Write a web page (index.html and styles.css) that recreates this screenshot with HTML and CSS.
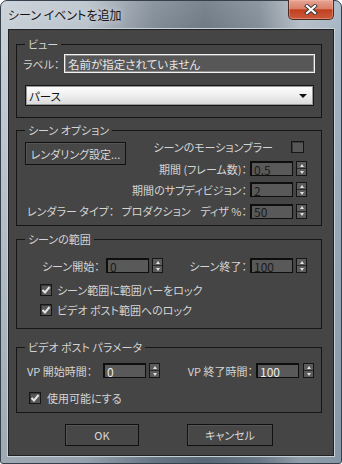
FILE: index.html
```html
<!DOCTYPE html>
<html lang="ja">
<head>
  <meta charset="UTF-8" />
  <meta name="viewport" content="width=device-width, initial-scale=1.0"/>
  <title>シーン イベントを追加</title>
  <link rel="stylesheet" href="styles.css">
</head>
<body>

  <div class="window">
    <div class="titlebar">
      <span class="title">シーン イベントを追加</span>
      <button class="close-btn" type="button">
        <svg width="14" height="11" viewBox="0 0 14 11">
          <path d="M3 2 L11 9 M11 2 L3 9" stroke="#3b3b3b" stroke-width="4" stroke-linecap="square"/>
          <path d="M3 2 L11 9 M11 2 L3 9" stroke="#ffffff" stroke-width="2.2" stroke-linecap="square"/>
        </svg>
      </button>
    </div>

    <div class="client">

      <fieldset class="group">
        <legend>ビュー</legend>
        <div class="group-body view-body">
          <div class="name-row">
            <label for="eventName">ラベル：</label>
            <input id="eventName" class="name-field" type="text" value="名前が指定されていません">
          </div>
          <div class="dropdown">
            <span>パース</span>
            <span class="dropdown-arrow"></span>
          </div>
        </div>
      </fieldset>

      <fieldset class="group group-options">
        <legend>シーン オプション</legend>
        <div class="group-body options-body">
          <div class="options-top">
            <button class="btn btn-render" type="button">レンダリング設定...</button>
            <div class="options-right">
              <div class="opt-row blur-row">
                <span>シーンのモーションブラー</span>
                <span class="check"></span>
              </div>
              <div class="opt-row">
                <span>期間 (フレーム数)：</span>
                <input class="num" type="text" value="0.5">
                <span class="spinner"><span class="spin-up"></span><span class="spin-down"></span></span>
              </div>
              <div class="opt-row">
                <span>期間のサブディビジョン：</span>
                <input class="num" type="text" value="2">
                <span class="spinner"><span class="spin-up"></span><span class="spin-down"></span></span>
              </div>
            </div>
          </div>
          <div class="options-bottom">
            <div class="renderer-type">レンダラー タイプ：&nbsp;&nbsp;&nbsp;プロダクション</div>
            <div class="opt-row">
              <span>ディザ %：</span>
              <input class="num" type="text" value="50">
              <span class="spinner"><span class="spin-up"></span><span class="spin-down"></span></span>
            </div>
          </div>
        </div>
      </fieldset>

      <fieldset class="group group-range">
        <legend>シーンの範囲</legend>
        <div class="group-body range-body">
          <div class="range-row">
            <div class="field-pair">
              <span class="range-label">シーン開始：</span>
              <input class="num" type="text" value="0">
              <span class="spinner"><span class="spin-up"></span><span class="spin-down"></span></span>
            </div>
            <div class="field-pair">
              <span>シーン終了：</span>
              <input class="num" type="text" value="100">
              <span class="spinner"><span class="spin-up"></span><span class="spin-down"></span></span>
            </div>
          </div>
          <div class="check-row range-check first">
            <span class="check checked"><svg width="10" height="10" viewBox="0 0 10 10"><path d="M1.5 5 L4 7.5 L8.5 2" fill="none" stroke="#e4e4e4" stroke-width="2"/></svg></span>
            <span>シーン範囲に範囲バーをロック</span>
          </div>
          <div class="check-row range-check">
            <span class="check checked"><svg width="10" height="10" viewBox="0 0 10 10"><path d="M1.5 5 L4 7.5 L8.5 2" fill="none" stroke="#e4e4e4" stroke-width="2"/></svg></span>
            <span>ビデオ ポスト範囲へのロック</span>
          </div>
        </div>
      </fieldset>

      <fieldset class="group group-vp">
        <legend>ビデオ ポスト パラメータ</legend>
        <div class="group-body vp-body">
          <div class="range-row">
            <div class="field-pair">
              <span class="vp-label">VP 開始時間：</span>
              <input class="num num-light" type="text" value="0">
              <span class="spinner"><span class="spin-up"></span><span class="spin-down"></span></span>
            </div>
            <div class="field-pair vp-end">
              <span>VP 終了時間：</span>
              <input class="num num-light" type="text" value="100">
              <span class="spinner"><span class="spin-up"></span><span class="spin-down"></span></span>
            </div>
          </div>
          <div class="check-row vp-check">
            <span class="check checked"><svg width="10" height="10" viewBox="0 0 10 10"><path d="M1.5 5 L4 7.5 L8.5 2" fill="none" stroke="#e4e4e4" stroke-width="2"/></svg></span>
            <span>使用可能にする</span>
          </div>
        </div>
      </fieldset>

      <div class="dialog-buttons">
        <button class="btn btn-ok" type="button">OK</button>
        <button class="btn btn-cancel" type="button">キャンセル</button>
      </div>

    </div>
  </div>

</body>
</html>
```

FILE: styles.css
```css
* {
  box-sizing: border-box;
}

body {
  margin: 0;
  font-family: "Noto Sans CJK JP", "Noto Sans", sans-serif;
  font-size: 11px;
  font-feature-settings: "palt";
  color: #d4d4d4;
  white-space: nowrap;
}

.window {
  width: 342px;
  height: 464px;
  display: flex;
  flex-direction: column;
  padding: 0 7px 7px;
  border: 1px solid #34404c;
  border-radius: 7px 7px 3px 3px;
  background:
    linear-gradient(to bottom, rgba(255, 255, 255, 0.12), rgba(255, 255, 255, 0) 40px, rgba(40, 60, 80, 0.25)),
    linear-gradient(to right, #c6ced6 0%, #b8c1ca 25%, #7d8894 45%, #6a7581 60%, #7f8a95 76%, #b3bdc6 88%, #a3b3c2 100%);
}

/* title bar */
.titlebar {
  height: 28px;
  display: flex;
  justify-content: space-between;
  align-items: flex-start;
}

.title {
  margin-top: 6px;
  font-size: 12px;
  line-height: 16px;
  color: #141414;
  text-shadow: 0 0 6px rgba(255, 255, 255, 0.7);
}

.close-btn {
  width: 46px;
  height: 20px;
  margin-top: -1px;
  padding: 0;
  display: flex;
  align-items: center;
  justify-content: center;
  border: 1px solid #4e2a24;
  border-top: none;
  border-radius: 0 0 5px 5px;
  background: linear-gradient(to bottom, #e7a595 0%, #d9806a 45%, #c2401f 52%, #cb5a3c 100%);
  box-shadow: inset 0 0 0 1px rgba(255, 200, 180, 0.35);
}

/* dialog body */
.client {
  flex: 1;
  display: flex;
  flex-direction: column;
  padding: 0 11px 0 7px;
  background: #454545;
  border: 1px solid #222222;
  box-shadow: 0 0 0 1px #c8d0d8;
}

.group {
  margin: 7px 0 0;
  padding: 0;
  min-width: 0;
  border: 1px solid #151515;
}

.group legend {
  margin-left: 8px;
  padding: 0 3px;
  line-height: 14px;
}

/* view */
.view-body {
  padding: 3px 6px 11px 6px;
}

.name-row {
  display: flex;
  align-items: center;
}

.name-row label {
  flex: 1;
}

.name-field {
  width: 251px;
  height: 19px;
  margin: 0;
  padding: 0 3px;
  font-family: inherit;
  font-size: 11.5px;
  font-feature-settings: "palt";
  color: #e6e6e6;
  background: #575757;
  border: 1px solid #f2f2f2;
  box-shadow: inset 0 0 0 1px #8c8c8c;
  outline: none;
}

.dropdown {
  height: 21px;
  margin: 12px 1px 0 2px;
  padding: 0 6px 0 3px;
  display: flex;
  align-items: center;
  justify-content: space-between;
  color: #111111;
  font-size: 11.5px;
  background: linear-gradient(to bottom, #ffffff, #f0f0f0 45%, #d9d9d9);
  border: 1px solid #161616;
  box-shadow: inset 0 0 0 1px #9a9a9a;
}

.dropdown-arrow {
  width: 0;
  height: 0;
  border-left: 4px solid transparent;
  border-right: 4px solid transparent;
  border-top: 4px solid #111111;
}

/* scene options */
.group-options {
  margin-top: 5px;
}

.options-body {
  padding: 4px 14px 6px 8px;
}

.options-top {
  display: flex;
  justify-content: space-between;
  align-items: flex-start;
}

.options-bottom {
  margin-top: 6px;
  display: flex;
  justify-content: space-between;
  align-items: center;
}

.btn {
  margin: 0;
  padding: 0;
  font-family: inherit;
  font-size: 11px;
  font-feature-settings: "palt";
  color: #d8d8d8;
  background: #474747;
  border: 1px solid #111111;
  box-shadow: inset 1px 1px 0 #555555;
}

.btn-render {
  width: 101px;
  height: 23px;
  margin-top: 1px;
}

.renderer-type {
  padding-left: 2px;
}

.options-right {
  display: flex;
  flex-direction: column;
  align-items: flex-end;
  gap: 6px;
}

.opt-row {
  height: 15px;
  display: flex;
  align-items: center;
  gap: 3px;
}

.blur-row {
  height: 12px;
  gap: 18px;
  margin-bottom: 2px;
  padding-right: 3px;
}

.num {
  width: 43px;
  height: 15px;
  margin: 0;
  padding: 0 2px;
  font-family: inherit;
  font-size: 12px;
  color: #1c1c1c;
  background: #595959;
  border: 1px solid #0e0e0e;
  border-width: 2px 1px 1px 2px;
  outline: none;
}

.num-light {
  color: #ececec;
}

.spinner {
  width: 11px;
  height: 15px;
  display: flex;
  flex-direction: column;
  border: 1px solid #151515;
  background: #5b5b5b;
}

.spin-up,
.spin-down {
  flex: 1;
  display: flex;
  align-items: center;
  justify-content: center;
}

.spin-up {
  border-bottom: 1px solid #2a2a2a;
}

.spin-up::after,
.spin-down::after {
  content: "";
  width: 0;
  height: 0;
  border-left: 2.5px solid transparent;
  border-right: 2.5px solid transparent;
}

.spin-up::after {
  border-bottom: 3px solid #e2e2e2;
}

.spin-down::after {
  border-top: 3px solid #e2e2e2;
}

.check {
  width: 13px;
  height: 12px;
  display: flex;
  align-items: center;
  justify-content: center;
  background: #575757;
  border: 1px solid #161616;
  box-shadow: inset 1px 1px 0 #3a3a3a;
}

.check.checked {
  width: 12px;
}

/* scene range */
.group-range {
  margin-top: 6px;
}

.range-body {
  padding: 12px 14px 12px 25px;
}

.range-row {
  display: flex;
  justify-content: space-between;
}

.field-pair {
  height: 15px;
  display: flex;
  align-items: center;
  gap: 3px;
}

.range-label {
  width: 61px;
}

.check-row {
  height: 12px;
  display: flex;
  align-items: center;
  gap: 5px;
}

.range-check {
  margin: 8px 0 0 -2px;
}

.range-check.first {
  margin-top: 11px;
}

/* video post */
.group-vp {
  margin-top: 11px;
}

.vp-body {
  padding: 9px 7px 8px 10px;
}

.vp-label {
  width: 73px;
}

.vp-end .spinner {
  margin-left: 1px;
}

.vp-check {
  margin: 14px 0 0 2px;
  gap: 6px;
}

/* bottom buttons */
.dialog-buttons {
  margin-top: 11px;
  display: flex;
  justify-content: center;
  gap: 48px;
}

.btn-ok {
  width: 74px;
  height: 22px;
}

.btn-cancel {
  width: 86px;
  height: 22px;
}
```
